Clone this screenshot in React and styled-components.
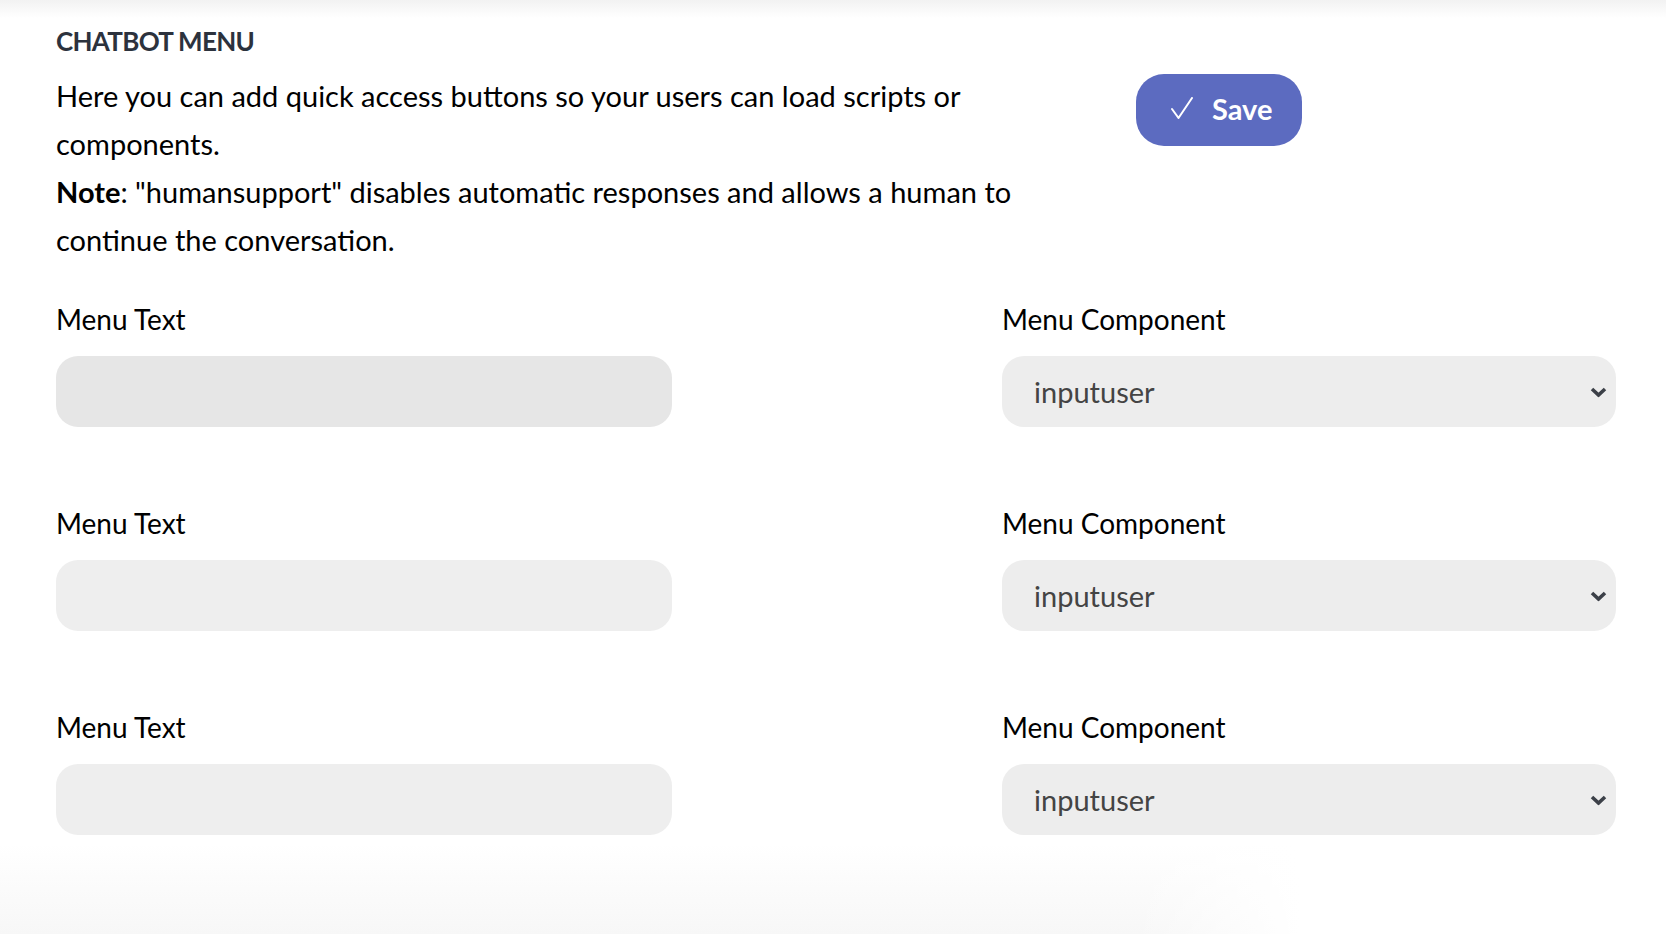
import React from 'react'
import styled, { createGlobalStyle } from 'styled-components'

const GlobalStyle = createGlobalStyle`
  html, body {
    margin: 0;
    padding: 0;
    background: #fff;
  }
  body {
    font-family: Lato, "Noto Sans", sans-serif;
    color: #000;
  }
`

const Page = styled.div`
  min-height: 934px;
  box-sizing: border-box;
  padding: 26px 0 0 56px;
  background:
    linear-gradient(to bottom, #f2f2f2 0, rgba(255, 255, 255, 0) 18px) top / 100% 18px no-repeat,
    linear-gradient(to right, rgba(255, 255, 255, 0) 0, rgba(255, 255, 255, 0) 68%, #fff 78%) bottom / 100% 90px no-repeat,
    linear-gradient(to bottom, #fff 0, #f7f7f7 100%) bottom / 100% 90px no-repeat,
    #fff;
`

const Title = styled.h1`
  margin: 0;
  font-size: 26px;
  line-height: 30px;
  font-weight: 700;
  letter-spacing: -0.7px;
  color: #2c323d;
`

const Intro = styled.div`
  display: flex;
  align-items: flex-start;
  margin-top: 16px;
`

const Description = styled.p`
  margin: 0;
  width: 1010px;
  font-size: 29px;
  line-height: 48px;
  color: #000;

  b {
    font-weight: 700;
  }
`

const SaveButton = styled.button`
  display: flex;
  align-items: center;
  gap: 19px;
  box-sizing: border-box;
  height: 72px;
  margin-top: 2px;
  margin-left: 70px;
  padding: 0 30px 4px 35px;
  border: none;
  border-radius: 28px;
  background: #5c6bc0;
  color: #fff;
  font-family: inherit;
  font-size: 29px;
  font-weight: 700;
  cursor: pointer;
`

const Rows = styled.div`
  display: flex;
  flex-direction: column;
  gap: 77px;
  margin-top: 36px;
`

const Row = styled.div`
  display: grid;
  grid-template-columns: 616px 614px;
  column-gap: 330px;
`

const Field = styled.label`
  display: flex;
  flex-direction: column;
  gap: 18px;
`

const Label = styled.span`
  font-size: 28px;
  line-height: 38px;
  color: #000;
`

const TextInput = styled.input`
  box-sizing: border-box;
  height: 71px;
  width: 100%;
  padding: 0 32px;
  border: none;
  border-radius: 22px;
  background: ${p => (p.$active ? '#e6e6e6' : '#eeeeee')};
  font-family: inherit;
  font-size: 29px;
  outline: none;
`

const SelectWrap = styled.div`
  position: relative;
`

const Select = styled.select`
  box-sizing: border-box;
  appearance: none;
  height: 71px;
  width: 100%;
  padding: 0 32px;
  border: none;
  border-radius: 22px;
  background: #ededed;
  color: #444;
  font-family: inherit;
  font-size: 29px;
  outline: none;
`

const Chevron = styled.svg`
  position: absolute;
  right: 9px;
  top: 50%;
  transform: translateY(-50%);
  pointer-events: none;
`

const CheckIcon = () => (
  <svg width='22' height='22' viewBox='0 0 22 22' fill='none'>
    <polyline points='1,12 7.5,21 21,1' stroke='#fff' strokeWidth='2' strokeLinejoin='round' strokeLinecap='round' />
  </svg>
)

const MenuRow = ({ active }) => (
  <Row>
    <Field>
      <Label>Menu Text</Label>
      <TextInput type='text' $active={active} />
    </Field>
    <Field as='div'>
      <Label>Menu Component</Label>
      <SelectWrap>
        <Select defaultValue='inputuser'>
          <option value='inputuser'>inputuser</option>
          <option value='humansupport'>humansupport</option>
        </Select>
        <Chevron width='17' height='11' viewBox='0 0 17 11'>
          <polyline points='2,2.5 8.5,8.5 15,2.5' fill='none' stroke='#3c4048' strokeWidth='3.6' strokeLinejoin='miter' />
        </Chevron>
      </SelectWrap>
    </Field>
  </Row>
)

export default function App() {
  return (
    <Page>
      <GlobalStyle />
      <Title>CHATBOT MENU</Title>
      <Intro>
        <Description>
          Here you can add quick access buttons so your users can load scripts or components.
          <br />
          <b>Note</b>: "humansupport" disables automatic responses and allows a human to continue the conversation.
        </Description>
        <SaveButton>
          <CheckIcon />
          Save
        </SaveButton>
      </Intro>
      <Rows>
        <MenuRow active />
        <MenuRow />
        <MenuRow />
      </Rows>
    </Page>
  )
}
